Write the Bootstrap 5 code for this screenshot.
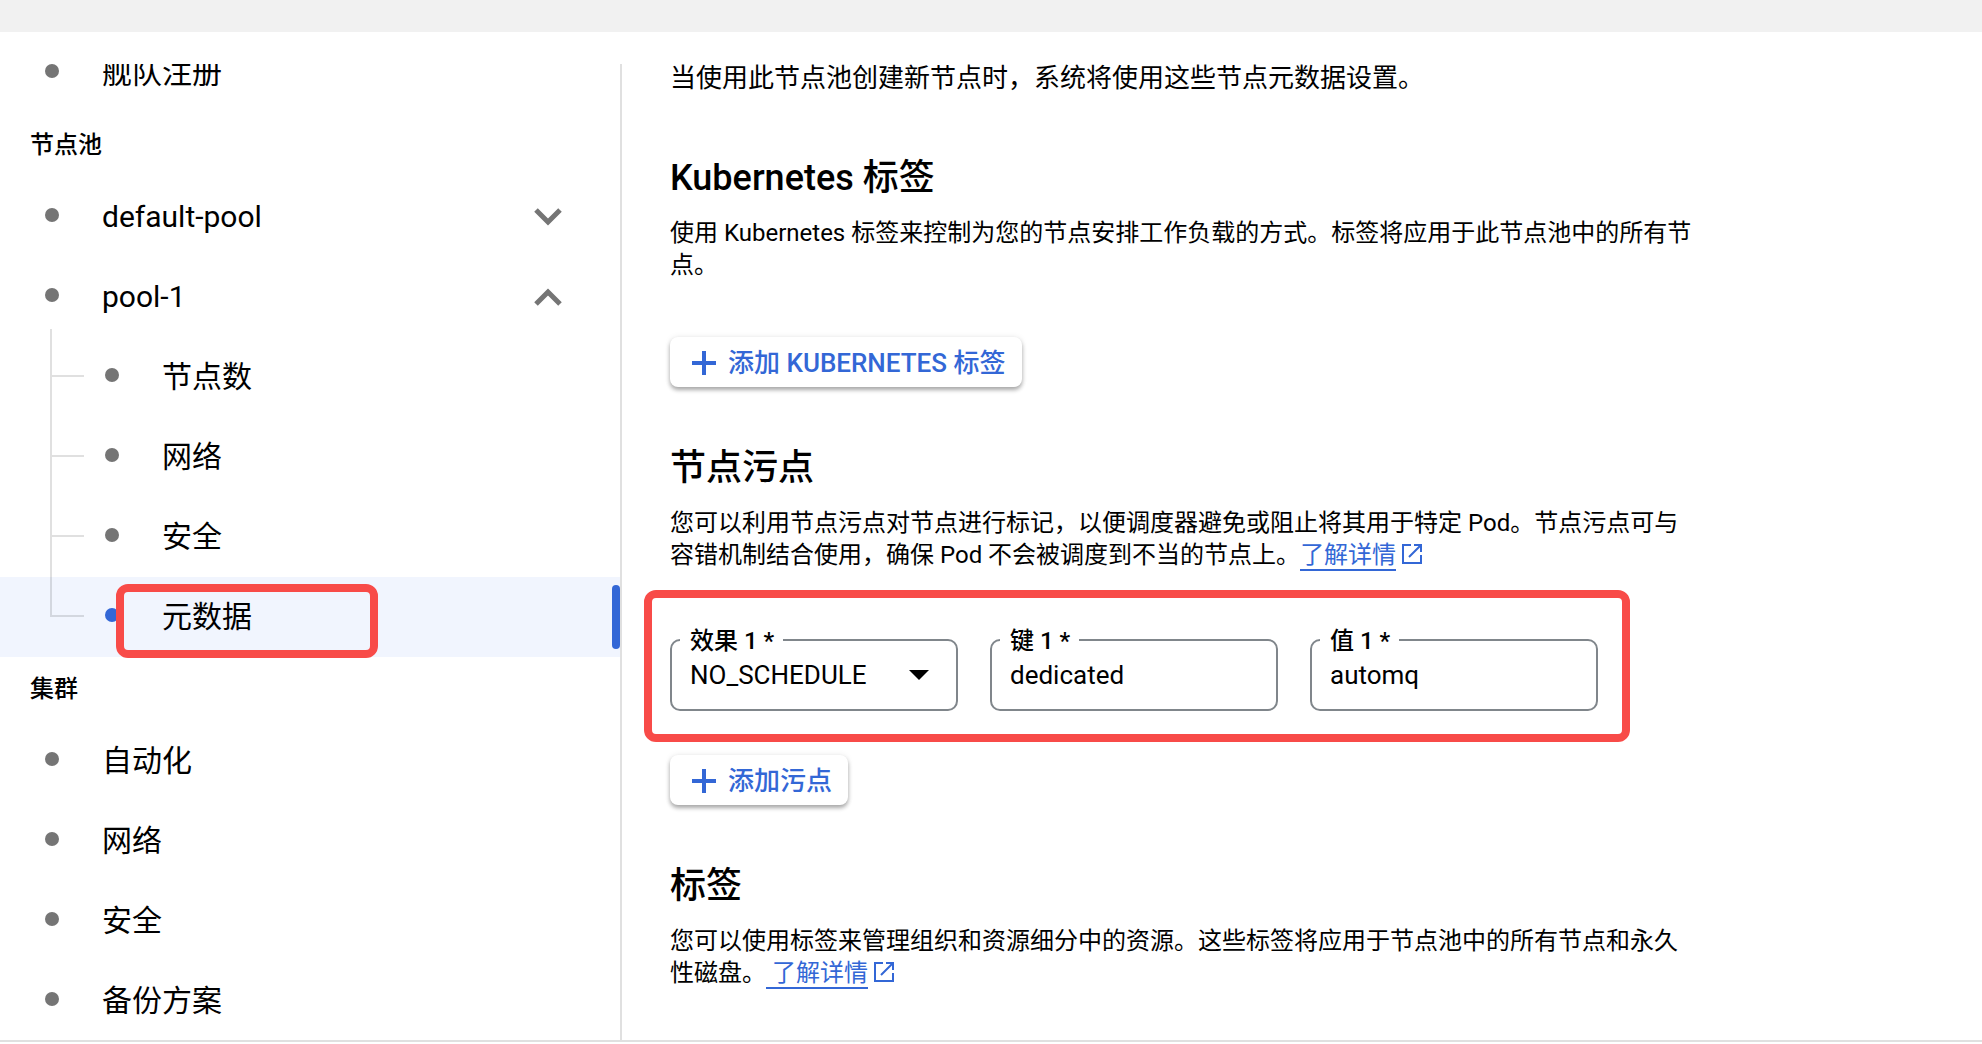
<!DOCTYPE html>
<html lang="zh-CN">
<head>
<meta charset="utf-8">
<meta name="viewport" content="width=device-width, initial-scale=1">
<title>节点元数据</title>
<link href="https://cdn.jsdelivr.net/npm/bootstrap@5.3.0/dist/css/bootstrap.min.css" rel="stylesheet">
<style>
:root { --ink: #000; --accent: #3367d6; --rule: #e0e0e0; --dot: #757575; --callout: #f84b48; }
body { font-family: Roboto, "Noto Sans CJK SC", sans-serif; color: var(--ink); background: #fff; }
.topbar { height: 32px; background: #f1f1f1; }
.workspace { border-bottom: 2px solid var(--rule); margin-bottom: 2px; padding-top: 32px; min-height: 0; }

/* side navigation */
.side-pane { width: 622px; border-right: 2px solid var(--rule); }
.side-scroll { margin-top: -31px; }
.side-item { height: 80px; padding-left: 45px; padding-right: 58px; font-size: 30px; line-height: 40px; color: var(--ink); }
.side-item::before { content: ""; width: 14px; height: 14px; border-radius: 50%; background: var(--dot); margin-right: 43px; margin-bottom: 4px; flex: none; }
.side-head { height: 64px; padding-left: 30px; font-size: 24px; line-height: 32px; font-weight: 500; }
.side-tree .side-item { padding-left: 105px; }
.side-tree li::before { content: ""; position: absolute; left: 50px; top: 0; width: 2px; height: 100%; background: rgba(0,0,0,.12); }
.side-tree li::after { content: ""; position: absolute; left: 52px; top: 38px; width: 32px; height: 2px; background: rgba(0,0,0,.12); }
.side-tree li:first-child::before { top: -8px; height: 88px; }
.side-tree li:last-child::before { height: 40px; }
.side-item.current { background: #f1f5fe; }
.side-item.current::before { background: var(--accent); }
.current-bar { right: 0; top: 8px; width: 8px; height: 64px; border-radius: 4px; background: var(--accent); }
.callout-nav { left: 116px; top: 7px; width: 262px; height: 74px; border: 8px solid var(--callout); border-radius: 12px; z-index: 1; pointer-events: none; }

/* content */
.main-pane { padding-left: 48px; padding-right: 48px; min-width: 0; }
.intro { font-size: 26px; line-height: 28px; margin-bottom: 62px; }
.sect-title { font-size: 36px; line-height: 48px; font-weight: 500; margin-bottom: 15px; }
.sect-text { font-size: 24px; line-height: 32px; max-width: 1024px; margin-bottom: 56px; }
.sect-text.tight { margin-bottom: 19px; }
.doc-link { color: var(--accent); text-decoration: none; }
.doc-link span { border-bottom: 2px solid var(--accent); white-space: pre; }
.doc-link svg { width: 20px; height: 20px; margin-left: 6px; vertical-align: -1px; }
.btn-raised { height: 50px; padding: 2px 16px 0 22px; gap: 12px; font-size: 26px; line-height: 32px; font-weight: 500; color: var(--accent); background: #fff; border: 0; border-radius: 8px; box-shadow: 0 3px 4px rgba(0,0,0,.32), 0 0 6px rgba(0,0,0,.08); margin-bottom: 57px; }
.btn-raised:hover { color: var(--accent); background: #f6f9fe; }
.taint-row { margin-left: -26px; margin-bottom: 13px; padding: 41px 24px 23px 18px; gap: 32px; border: 8px solid var(--callout); border-radius: 12px; width: fit-content; }
.field-box { width: 288px; }
.field-box .form-control, .field-box .form-select { height: 72px; border: 2px solid #80868b; border-radius: 10px; padding: 0 18px; font-size: 26px; line-height: 32px; color: var(--ink); background: #fff; }
.field-box label { left: 10px; top: -14px; padding: 0 9px 0 10px; background: #fff; font-size: 24px; line-height: 32px; font-weight: 500; }
.field-box svg { right: 29px; top: 31px; pointer-events: none; }
</style>
<script src="https://cdn.jsdelivr.net/npm/bootstrap@5.3.0/dist/js/bootstrap.bundle.min.js"></script>
</head>
<body class="vh-100 d-flex flex-column overflow-hidden">
<header class="topbar flex-shrink-0"></header>
<div class="workspace d-flex flex-fill">
  <nav class="side-pane flex-shrink-0 overflow-hidden" aria-label="设置">
    <div class="side-scroll">
      <a href="#" class="side-item d-flex align-items-center text-decoration-none">舰队注册</a>
      <div class="side-head d-flex align-items-center">节点池</div>
      <a href="#" class="side-item d-flex align-items-center text-decoration-none">default-pool
        <svg class="ms-auto" width="28" height="18" viewBox="0 0 28 18" fill="none" stroke="#757575" stroke-width="5"><path d="M2 2l12 12L26 2"/></svg></a>
      <a href="#" class="side-item d-flex align-items-center text-decoration-none">pool-1
        <svg class="ms-auto" width="28" height="18" viewBox="0 0 28 18" fill="none" stroke="#757575" stroke-width="5"><path d="M2 16L14 4l12 12"/></svg></a>
      <ul class="side-tree list-unstyled mb-0">
        <li class="position-relative"><a href="#" class="side-item d-flex align-items-center text-decoration-none">节点数</a></li>
        <li class="position-relative"><a href="#" class="side-item d-flex align-items-center text-decoration-none">网络</a></li>
        <li class="position-relative"><a href="#" class="side-item d-flex align-items-center text-decoration-none">安全</a></li>
        <li class="position-relative"><a href="#" class="side-item current d-flex align-items-center text-decoration-none" aria-current="page">元数据</a>
          <span class="current-bar position-absolute"></span><span class="callout-nav position-absolute"></span></li>
      </ul>
      <div class="side-head d-flex align-items-center">集群</div>
      <a href="#" class="side-item d-flex align-items-center text-decoration-none">自动化</a>
      <a href="#" class="side-item d-flex align-items-center text-decoration-none">网络</a>
      <a href="#" class="side-item d-flex align-items-center text-decoration-none">安全</a>
      <a href="#" class="side-item d-flex align-items-center text-decoration-none">备份方案</a>
    </div>
  </nav>
  <main class="main-pane flex-fill overflow-hidden">
    <p class="intro">当使用此节点池创建新节点时，系统将使用这些节点元数据设置。</p>

    <h2 class="sect-title">Kubernetes 标签</h2>
    <p class="sect-text">使用 Kubernetes 标签来控制为您的节点安排工作负载的方式。标签将应用于此节点池中的所有节点。</p>
    <button type="button" class="btn btn-raised d-flex align-items-center">
      <svg width="24" height="24" viewBox="0 0 24 24" fill="none" stroke="currentColor" stroke-width="4"><path d="M12 0v24M0 12h24"/></svg>添加 KUBERNETES 标签</button>

    <h2 class="sect-title">节点污点</h2>
    <p class="sect-text tight">您可以利用节点污点对节点进行标记，以便调度器避免或阻止将其用于特定 Pod。节点污点可与容错机制结合使用，确保 Pod 不会被调度到不当的节点上。<a href="#" class="doc-link"><span>了解详情</span><svg viewBox="0 0 20 20" fill="none" stroke="currentColor" stroke-width="2"><path d="M9 1H1v18h18v-8M12 1h7v7M19 1L7 13"/></svg></a></p>
    <form class="taint-row d-flex">
      <div class="field-box position-relative">
        <select class="form-select" id="taint-effect"><option>NO_SCHEDULE</option></select>
        <label class="position-absolute" for="taint-effect">效果 1 *</label>
        <svg class="position-absolute" width="20" height="10" viewBox="0 0 20 10"><path d="M0 0h20L10 10z"/></svg>
      </div>
      <div class="field-box position-relative">
        <input class="form-control" id="taint-key" type="text" value="dedicated">
        <label class="position-absolute" for="taint-key">键 1 *</label>
      </div>
      <div class="field-box position-relative">
        <input class="form-control" id="taint-value" type="text" value="automq">
        <label class="position-absolute" for="taint-value">值 1 *</label>
      </div>
    </form>
    <button type="button" class="btn btn-raised d-flex align-items-center">
      <svg width="24" height="24" viewBox="0 0 24 24" fill="none" stroke="currentColor" stroke-width="4"><path d="M12 0v24M0 12h24"/></svg>添加污点</button>

    <h2 class="sect-title">标签</h2>
    <p class="sect-text">您可以使用标签来管理组织和资源细分中的资源。这些标签将应用于节点池中的所有节点和永久性磁盘。<a href="#" class="doc-link"><span> 了解详情</span><svg viewBox="0 0 20 20" fill="none" stroke="currentColor" stroke-width="2"><path d="M9 1H1v18h18v-8M12 1h7v7M19 1L7 13"/></svg></a></p>
  </main>
</div>
</body>
</html>
